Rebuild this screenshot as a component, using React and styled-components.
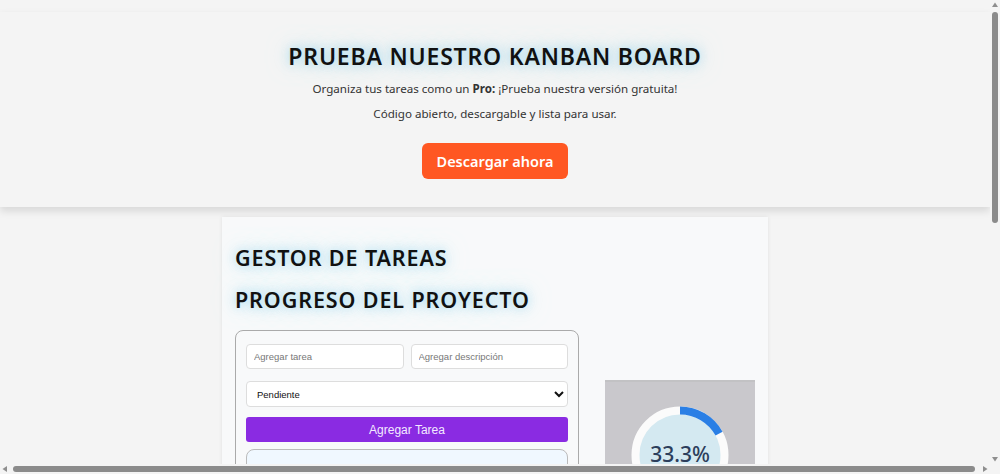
import React from "react";
import styled, { createGlobalStyle } from "styled-components";

const GlobalStyle = createGlobalStyle`
  html, body {
    margin: 0;
    padding: 0;
    overflow: hidden;
    background: #f4f4f4;
    font-family: "Noto Sans", "Open Sans", sans-serif;
  }
  * {
    box-sizing: border-box;
  }
`;

// window frame: page area + classic scrollbars
const Frame = styled.div`
  width: 100vw;
  height: 100vh;
  display: grid;
  grid-template-columns: 1fr 10px;
  grid-template-rows: 1fr 10px;
  background: #f4f4f4;
`;

const PageArea = styled.div`
  overflow: hidden;
  min-width: 0;
  min-height: 0;
`;

const ScrollBar = styled.div`
  display: flex;
  flex-direction: ${(p) => (p.$vertical ? "column" : "row")};
  background: #f4f4f4;
`;

const ArrowBtn = styled.div`
  flex: 0 0 10px;
  width: 10px;
  height: 10px;
  display: flex;
  align-items: center;
  justify-content: center;
`;

const Track = styled.div`
  flex: 1;
  display: flex;
  flex-direction: ${(p) => (p.$vertical ? "column" : "row")};
  padding: ${(p) => (p.$vertical ? "2px 2px" : "2px 2px 2px 3px")};
`;

const Thumb = styled.div`
  flex: 0 0 auto;
  border-radius: 4px;
  background: #8b8b8b;
`;

const Corner = styled.div`
  background: #f4f4f4;
`;

const Arrow = ({ points }) => (
  <svg width="8" height="8" viewBox="0 0 8 8">
    <polygon points={points} fill="#8e8e8e" />
  </svg>
);

const Banner = styled.section`
  width: 100%;
  margin-top: 12px;
  padding: 28px 20px 28px;
  background: #f4f4f4;
  box-shadow: 0 4px 8px rgba(0, 0, 0, 0.12);
  text-align: center;
`;

const BannerTitle = styled.h1`
  margin: 0 0 9px;
  font-size: 23px;
  font-weight: 600;
  letter-spacing: 0.8px;
  color: #111;
  text-shadow: 0 0 10px rgba(150, 215, 240, 0.85), 0 0 22px rgba(150, 215, 240, 0.6);
`;

const BannerText = styled.p`
  margin: 0 0 10px;
  font-size: 11.6px;
  line-height: 15px;
  color: #333;
`;

const DownloadButton = styled.button`
  margin-top: 12px;
  padding: 0 15px;
  height: 36px;
  border: none;
  border-radius: 6px;
  background: #ff5722;
  color: #fff;
  font-family: inherit;
  font-size: 14.5px;
  font-weight: 600;
  cursor: pointer;
`;

const Card = styled.main`
  width: 546px;
  margin: 10px auto 20px;
  padding: 26px 13px 30px;
  background: #f8f9fa;
  box-shadow: 0 0 4px rgba(0, 0, 0, 0.08);
`;

const Heading = styled.h2`
  margin: 0 0 13px;
  font-size: 21.5px;
  font-weight: 600;
  letter-spacing: 0.9px;
  color: #111;
  text-shadow: 0 0 10px rgba(150, 215, 240, 0.85), 0 0 22px rgba(150, 215, 240, 0.6);
`;

const Columns = styled.div`
  display: flex;
  align-items: flex-start;
  gap: 26px;
  margin-top: 16px;
`;

const FormBox = styled.div`
  width: 344px;
  padding: 13px 10px 10px;
  border: 1px solid #aaa;
  border-radius: 8px;
  display: flex;
  flex-direction: column;
  gap: 10px;
`;

const InputRow = styled.div`
  display: flex;
  gap: 7px;
  margin-bottom: 2px;
`;

const Input = styled.input`
  flex: 1;
  min-width: 0;
  height: 25px;
  padding: 0 7px;
  border: 1px solid #ddd;
  border-radius: 4px;
  background: #fff;
  font-family: "Liberation Sans", Arial, sans-serif;
  font-size: 9.5px;
  outline: none;
  &::placeholder {
    color: #777;
  }
`;

const Select = styled.select`
  height: 26px;
  padding: 0 6px;
  border: 1px solid #ddd;
  border-radius: 4px;
  background: #fff;
  font-family: "Liberation Sans", Arial, sans-serif;
  font-size: 9.5px;
  color: #111;
`;

const AddButton = styled.button`
  height: 25px;
  border: none;
  border-radius: 3px;
  background: #8a2be2;
  color: #f3eaff;
  font-family: "Liberation Sans", Arial, sans-serif;
  font-size: 12px;
  cursor: pointer;
`;

const TaskList = styled.div`
  margin-top: -3px;
  min-height: 470px;
  padding: 15px 10px;
  border: 1px solid #bbb;
  border-radius: 8px;
  background: #f0f8ff;
`;

const TaskItem = styled.div`
  padding: 10px;
  margin-bottom: 10px;
  border-radius: 6px;
  background: #fff;
  border: 1px solid #e2e2e2;
  font-family: "Liberation Sans", Arial, sans-serif;
  font-size: 11px;
  color: #333;
`;

const ChartBox = styled.div`
  width: 150px;
  height: 200px;
  margin-top: 50px;
  background: #c9c8cc;
  border-top: 2px solid #c2c2c4;
  display: flex;
  justify-content: center;
  padding-top: 24px;
`;

const Donut = styled.div`
  position: relative;
  width: 98px;
  height: 98px;
`;

const Percent = styled.span`
  position: absolute;
  left: 0;
  right: 0;
  top: 34px;
  text-align: center;
  font-size: 21px;
  font-weight: 500;
  color: #2c3e5c;
`;

const Progress = ({ value, shown }) => {
  const r = 44.5;
  const c = 2 * Math.PI * r;
  return (
    <Donut>
      <svg width="98" height="98" viewBox="0 0 98 98">
        <circle cx="49" cy="49" r={r} fill="#d4e9f1" stroke="#fbfbfb" strokeWidth="8" />
        <circle
          cx="49"
          cy="49"
          r={r}
          fill="none"
          stroke="#2a7fe5"
          strokeWidth="8"
          strokeDasharray={`${c * shown} ${c}`}
          transform="rotate(-90 49 49)"
        />
      </svg>
      <Percent>{value}</Percent>
    </Donut>
  );
};

const App = () => {
  return (
    <Frame>
      <GlobalStyle />
      <PageArea>
        <Banner>
          <BannerTitle>PRUEBA NUESTRO KANBAN BOARD</BannerTitle>
          <BannerText>
            Organiza tus tareas como un <b>Pro:</b> ¡Prueba nuestra versión gratuita!
          </BannerText>
          <BannerText>Código abierto, descargable y lista para usar.</BannerText>
          <DownloadButton>Descargar ahora</DownloadButton>
        </Banner>
        <Card>
          <Heading>GESTOR DE TAREAS</Heading>
          <Heading>PROGRESO DEL PROYECTO</Heading>
          <Columns>
            <FormBox>
              <InputRow>
                <Input placeholder="Agregar tarea" />
                <Input placeholder="Agregar descripción" />
              </InputRow>
              <Select defaultValue="Pendiente">
                <option>Pendiente</option>
                <option>En progreso</option>
                <option>Completada</option>
              </Select>
              <AddButton>Agregar Tarea</AddButton>
              <TaskList>
                <TaskItem>Diseñar tablero</TaskItem>
                <TaskItem>Configurar proyecto</TaskItem>
                <TaskItem>Publicar versión</TaskItem>
              </TaskList>
            </FormBox>
            <ChartBox>
              <Progress value="33.3%" shown={0.17} />
            </ChartBox>
          </Columns>
        </Card>
      </PageArea>
      <ScrollBar $vertical>
        <ArrowBtn>
          <Arrow points="4,1.5 7,6 1,6" />
        </ArrowBtn>
        <Track $vertical>
          <Thumb style={{ height: 211, width: 6 }} />
        </Track>
        <ArrowBtn>
          <Arrow points="1,2 7,2 4,6.5" />
        </ArrowBtn>
      </ScrollBar>
      <ScrollBar>
        <ArrowBtn>
          <Arrow points="1.5,4 6,1 6,7" />
        </ArrowBtn>
        <Track>
          <Thumb style={{ width: 962, height: 6 }} />
        </Track>
        <ArrowBtn>
          <Arrow points="2,1 6.5,4 2,7" />
        </ArrowBtn>
      </ScrollBar>
      <Corner />
    </Frame>
  );
};

export default App;
